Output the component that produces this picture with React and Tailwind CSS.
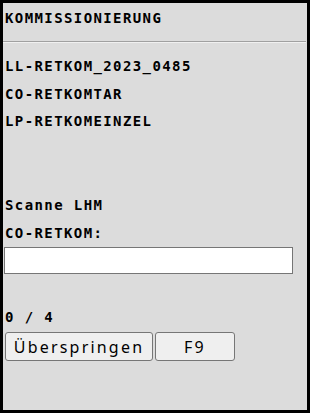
export default function App() {
  return (
    <div className="w-[310px] h-[413px] border-[3px] border-black bg-[#dcdcdc] text-black overflow-hidden">
      <div className="font-['DejaVu_Sans_Mono',monospace] font-bold text-[14px] tracking-[1.4px] pl-[2px] pt-[7px] leading-[16px]">
        KOMMISSIONIERUNG
      </div>
      <div className="mt-[15px] h-[2px] border-t border-t-[#a0a0a0] border-b border-b-[#f0f0f0] mr-[1px]" />
      <div className="mt-[9px] font-['DejaVu_Sans_Mono',monospace] font-bold text-[14px] tracking-[1.4px] leading-[28px] pl-[2px]">
        <div>LL-RETKOM_2023_0485</div>
        <div>CO-RETKOMTAR</div>
        <div className="-mt-[1px]">LP-RETKOMEINZEL</div>
      </div>
      <div className="mt-[56px] font-['DejaVu_Sans_Mono',monospace] font-bold text-[14px] tracking-[1.4px] leading-[28px] pl-[2px]">
        <div>Scanne LHM</div>
        <div>CO-RETKOM:</div>
      </div>
      <div className="pl-[1px]">
        <input
          type="text"
          className="block w-[289px] h-[27px] bg-white border border-[#767676] outline-none"
        />
      </div>
      <div className="mt-[29px] font-['DejaVu_Sans_Mono',monospace] font-bold text-[14px] tracking-[1.4px] leading-[28px] pl-[2px]">
        0 / 4
      </div>
      <div className="mt-[1px] pl-[2px] flex gap-[2px] font-['Noto_Sans',sans-serif] text-[16px]">
        <button className="h-[29px] w-[148px] bg-[#efefef] border border-[#767676] rounded-[3px] leading-none tracking-[2.2px]">
          Überspringen
        </button>
        <button className="h-[29px] w-[80px] bg-[#efefef] border border-[#767676] rounded-[3px] leading-none tracking-[2.2px]">
          F9
        </button>
      </div>
    </div>
  );
}
